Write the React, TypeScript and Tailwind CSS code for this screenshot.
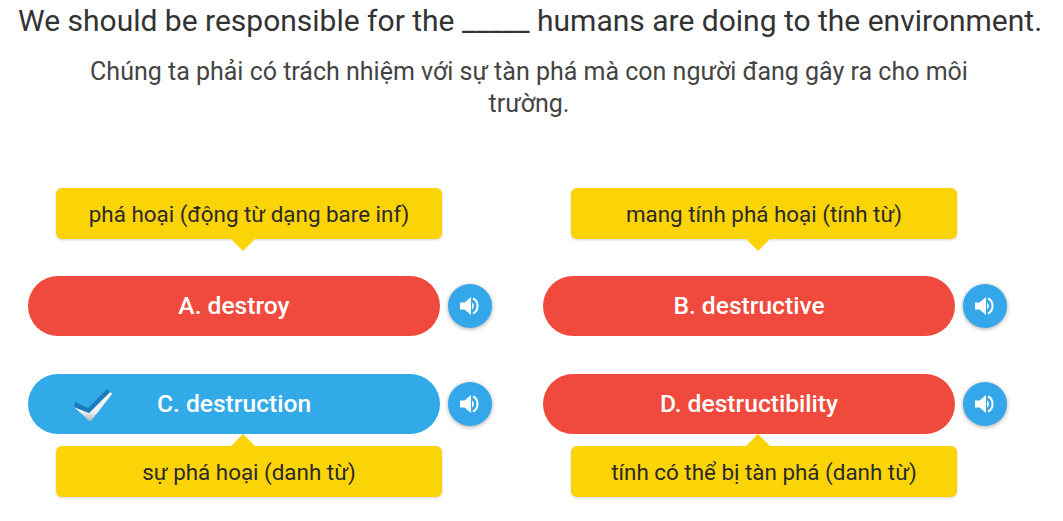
import React from "react";

const Speaker = () => (
  <button className="ml-2 flex h-11 w-11 shrink-0 items-center justify-center rounded-full bg-[#33a7ea] shadow-[0_1px_4px_rgba(0,0,0,0.35)]">
    <svg width="22" height="22" viewBox="0 0 22 22" fill="none">
      <path d="M1 7.500h4.500L12 2v18l-6.500-5.500H1z" fill="#fff" />
      <path d="M14 3.500c6 2.500 6 12.500 0 15" stroke="#fff" strokeWidth="2" />
      <path d="M13 7.500c2.500 1.500 2.500 5.500 0 7z" fill="#fff" />
    </svg>
  </button>
);

const Tip = ({ text, arrow }: { text: string; arrow: "up" | "down" }) => (
  <div className="relative ml-14 flex h-[51px] w-[386px] items-center justify-center rounded-md bg-[#fbd407] pt-[2px] text-[22.4px] text-[#2a2a2a] shadow-[0_1px_3px_rgba(0,0,0,0.18)]">
    {text}
    {arrow === "down" ? (
      <div className="absolute top-full left-[175px] h-0 w-0 border-x-[12px] border-t-[12px] border-x-transparent border-t-[#fbd407]" />
    ) : (
      <div className="absolute bottom-full left-[175px] h-0 w-0 border-x-[12px] border-b-[12px] border-x-transparent border-b-[#fbd407]" />
    )}
  </div>
);

const Answer = ({ label, selected }: { label: string; selected?: boolean }) => (
  <div className="flex items-center">
    <div
      className={`relative flex h-[60px] w-[412px] items-center justify-center rounded-[30px] text-[24.6px] font-medium text-white ${
        selected ? "bg-[#33aae8]" : "bg-[#ef4a3d]"
      }`}
    >
      {selected && (
        <svg className="absolute top-[14px] left-[44px]" width="40" height="34" viewBox="0 0 40 34">
          <defs>
            <linearGradient id="checkFill" x1="0" y1="0" x2="0" y2="1">
              <stop offset="0" stopColor="#ffffff" />
              <stop offset="0.7" stopColor="#eef1f3" />
              <stop offset="1" stopColor="#aab3ba" />
            </linearGradient>
          </defs>
          <path d="M2 19l15 6L38 4l2 2-21 27h-2C13 28 7 24 2 19z" fill="url(#checkFill)" />
          <path d="M3 14l13 6L35 1l3 3-21 21-15-6z" fill="#1a7cbd" />
        </svg>
      )}
      {label}
    </div>
    <Speaker />
  </div>
);

const App: React.FC = () => {
  return (
    <div className="h-[521px] w-[1063px] overflow-hidden bg-white font-['Roboto',sans-serif]">
      <h1 className="h-[56px] whitespace-nowrap pl-[18px] text-[30px] leading-[41px] text-[#333]">
        We should be responsible for the _____ humans are doing to the environment.
      </h1>
      <p className="ml-[79px] w-[900px] text-center text-[25px] leading-[32px] text-[#444]">
        Chúng ta phải có trách nhiệm với sự tàn phá mà con người đang gây ra cho môi trường.
      </p>
      <div className="mt-[68px] grid grid-cols-[515px_1fr]">
        <div>
          <Tip text="phá hoại (động từ dạng bare inf)" arrow="down" />
          <div className="mt-[37px] ml-7">
            <Answer label="A. destroy" />
          </div>
        </div>
        <div>
          <Tip text="mang tính phá hoại (tính từ)" arrow="down" />
          <div className="mt-[37px] ml-7">
            <Answer label="B. destructive" />
          </div>
        </div>
        <div className="mt-[38px]">
          <div className="ml-7">
            <Answer label="C. destruction" selected />
          </div>
          <div className="mt-3">
            <Tip text="sự phá hoại (danh từ)" arrow="up" />
          </div>
        </div>
        <div className="mt-[38px]">
          <div className="ml-7">
            <Answer label="D. destructibility" />
          </div>
          <div className="mt-3">
            <Tip text="tính có thể bị tàn phá (danh từ)" arrow="up" />
          </div>
        </div>
      </div>
    </div>
  );
};

export default App;
